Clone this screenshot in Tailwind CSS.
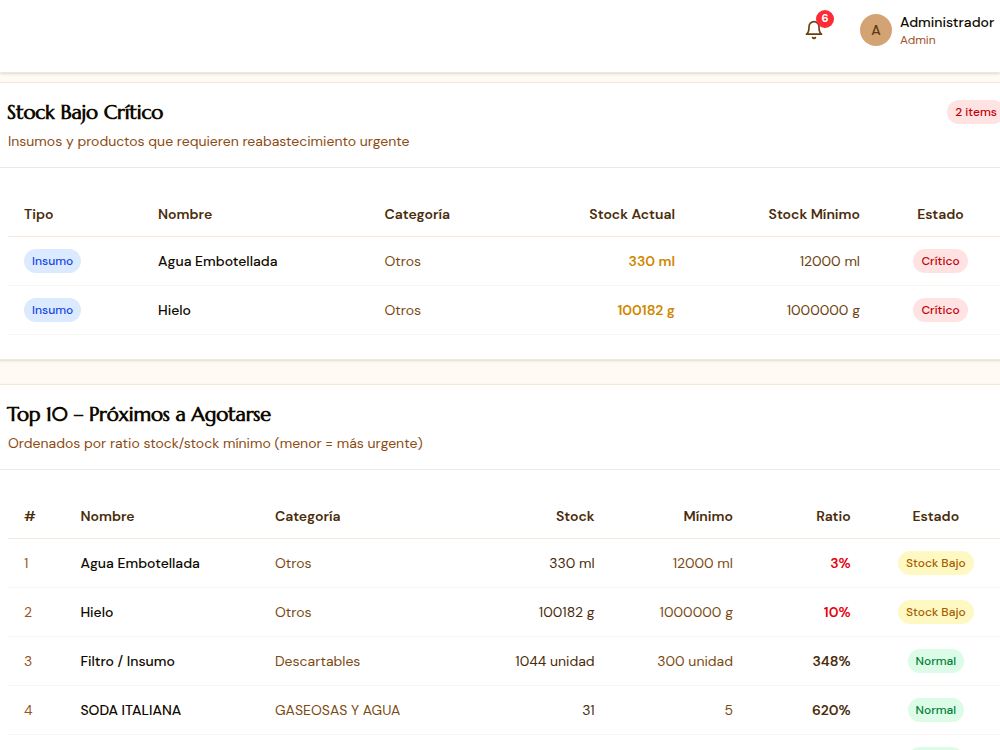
<!DOCTYPE html>
<html lang="es">
<head>
  <meta charset="UTF-8">
  <meta name="viewport" content="width=device-width, initial-scale=1.0">
  <title>Inventario</title>
  <script src="https://cdn.jsdelivr.net/npm/@tailwindcss/browser@4"></script>
</head>
<body class="h-[750px] overflow-hidden bg-[#fffaf3] font-['DM_Sans',Inter,sans-serif] text-sm text-[#0f0a00]">

  <!-- Top bar -->
  <header class="relative h-[73px] bg-white border-b border-[#f0e6da] shadow-sm flex justify-end items-start">
    <button class="relative mt-5 mr-9 w-5 h-5">
      <svg class="w-5 h-5" viewBox="0 0 24 24" fill="none" stroke="#6b3f0c" stroke-width="2" stroke-linecap="round" stroke-linejoin="round">
        <path d="M6 8a6 6 0 0 1 12 0c0 7 3 9 3 9H3s3-2 3-9" />
        <path d="M10.3 21a1.94 1.94 0 0 0 3.4 0" />
      </svg>
      <span class="absolute -top-2.5 left-3 w-[18px] h-[18px] rounded-full bg-[#fb2c36] text-white text-[11px] font-bold flex items-center justify-center">6</span>
    </button>
    <div class="flex gap-2 w-[140px] mt-3">
      <div class="mt-0.5 w-8 h-8 shrink-0 rounded-full bg-[#d4a373] text-[#5c3a0c] font-medium flex items-center justify-center">A</div>
      <div class="whitespace-nowrap">
        <p class="font-medium leading-5">Administrador</p>
        <p class="text-xs text-[#a0522d]">Admin</p>
      </div>
    </div>
  </header>

  <main class="mt-[9px] w-[1044px] -ml-4 space-y-6">

    <!-- Critical stock -->
    <section class="h-[278px] bg-white border border-[#f5e9dc] rounded-lg shadow-sm">
      <div class="h-[85px] px-[23px] pt-4 border-b border-[#f0e9df] flex justify-between items-start">
        <div>
          <h2 class="-ml-px font-[Marcellus,Lato,sans-serif] text-xl leading-7 font-bold tracking-[-0.2px]">Stock Bajo Crítico</h2>
          <p class="mt-1 text-[#8b4c13]">Insumos y productos que requieren reabastecimiento urgente</p>
        </div>
        <span class="mt-px -mr-px h-6 px-2 rounded-full bg-[#ffe2e2] text-[#c10007] text-xs leading-6 font-medium">2 items</span>
      </div>
      <div class="px-[23px] pt-6">
        <table class="w-[997px] table-fixed">
          <colgroup>
            <col class="w-[134px]"><col class="w-[226.5px]"><col class="w-[180px]"><col class="w-[142.5px]"><col class="w-[185px]"><col class="w-[129px]">
          </colgroup>
          <thead>
            <tr class="h-11 border-b border-[#f5e9dc] text-[#4a2c0a]">
              <th class="px-4 text-left font-semibold">Tipo</th>
              <th class="px-4 text-left font-semibold">Nombre</th>
              <th class="px-4 text-left font-semibold">Categoría</th>
              <th class="px-4 text-right font-semibold">Stock Actual</th>
              <th class="px-4 text-right font-semibold">Stock Mínimo</th>
              <th class="px-4 text-center font-semibold">Estado</th>
            </tr>
          </thead>
          <tbody>
            <tr class="h-[49px] border-b border-[#f7f5f2]">
              <td class="px-4"><span class="inline-block h-6 px-2 rounded-full bg-[#dbeafe] text-[#1447e6] text-xs leading-6 font-medium align-middle">Insumo</span></td>
              <td class="px-4 font-medium">Agua Embotellada</td>
              <td class="px-4 text-[#7b4a12]">Otros</td>
              <td class="px-4 text-right font-semibold text-[#d08700]">330 ml</td>
              <td class="px-4 text-right text-[#6b4210]">12000 ml</td>
              <td class="px-4 text-center"><span class="inline-block h-6 px-2 rounded-full bg-[#ffe2e2] text-[#c10007] text-xs leading-6 font-medium align-middle">Crítico</span></td>
            </tr>
            <tr class="h-[49px] border-b border-[#f7f5f2]">
              <td class="px-4"><span class="inline-block h-6 px-2 rounded-full bg-[#dbeafe] text-[#1447e6] text-xs leading-6 font-medium align-middle">Insumo</span></td>
              <td class="px-4 font-medium">Hielo</td>
              <td class="px-4 text-[#7b4a12]">Otros</td>
              <td class="px-4 text-right font-semibold text-[#d08700]">100182 g</td>
              <td class="px-4 text-right text-[#6b4210]">1000000 g</td>
              <td class="px-4 text-center"><span class="inline-block h-6 px-2 rounded-full bg-[#ffe2e2] text-[#c10007] text-xs leading-6 font-medium align-middle">Crítico</span></td>
            </tr>
          </tbody>
        </table>
      </div>
    </section>

    <!-- Top 10 -->
    <section class="bg-white border border-[#f5e9dc] rounded-lg shadow-sm">
      <div class="h-[85px] px-[23px] pt-4 border-b border-[#f0e9df]">
        <h2 class="-ml-px font-[Marcellus,Lato,sans-serif] text-xl leading-7 font-bold tracking-[-0.2px]">Top 10 – Próximos a Agotarse</h2>
        <p class="mt-1 text-[#8b4c13]">Ordenados por ratio stock/stock mínimo (menor = más urgente)</p>
      </div>
      <div class="px-[23px] pt-6">
        <table class="w-[997px] table-fixed">
          <colgroup>
            <col class="w-[56.4px]"><col class="w-[194.6px]"><col class="w-[210px]"><col class="w-[141.6px]"><col class="w-[138.4px]"><col class="w-[117.7px]"><col class="w-[138.3px]">
          </colgroup>
          <thead>
            <tr class="h-11 border-b border-[#f5e9dc] text-[#4a2c0a]">
              <th class="px-4 text-left font-semibold">#</th>
              <th class="px-4 text-left font-semibold">Nombre</th>
              <th class="px-4 text-left font-semibold">Categoría</th>
              <th class="px-4 text-right font-semibold">Stock</th>
              <th class="px-4 text-right font-semibold">Mínimo</th>
              <th class="px-4 text-right font-semibold">Ratio</th>
              <th class="px-4 text-center font-semibold">Estado</th>
            </tr>
          </thead>
          <tbody>
            <tr class="h-[49px] border-b border-[#f7f5f2]">
              <td class="px-4 text-[#9a5520]">1</td>
              <td class="px-4 font-medium">Agua Embotellada</td>
              <td class="px-4 text-[#7b4a12]">Otros</td>
              <td class="px-4 text-right text-[#4a2c0a]">330 ml</td>
              <td class="px-4 text-right text-[#7b4a12]">12000 ml</td>
              <td class="px-4 text-right font-semibold text-[#e7000b]">3%</td>
              <td class="px-4 text-center"><span class="inline-block h-6 px-2 rounded-full bg-[#fef9c2] text-[#a65f00] text-xs leading-6 font-medium align-middle">Stock Bajo</span></td>
            </tr>
            <tr class="h-[49px] border-b border-[#f7f5f2]">
              <td class="px-4 text-[#9a5520]">2</td>
              <td class="px-4 font-medium">Hielo</td>
              <td class="px-4 text-[#7b4a12]">Otros</td>
              <td class="px-4 text-right text-[#4a2c0a]">100182 g</td>
              <td class="px-4 text-right text-[#7b4a12]">1000000 g</td>
              <td class="px-4 text-right font-semibold text-[#e7000b]">10%</td>
              <td class="px-4 text-center"><span class="inline-block h-6 px-2 rounded-full bg-[#fef9c2] text-[#a65f00] text-xs leading-6 font-medium align-middle">Stock Bajo</span></td>
            </tr>
            <tr class="h-[49px] border-b border-[#f7f5f2]">
              <td class="px-4 text-[#9a5520]">3</td>
              <td class="px-4 font-medium">Filtro / Insumo</td>
              <td class="px-4 text-[#7b4a12]">Descartables</td>
              <td class="px-4 text-right text-[#4a2c0a]">1044 unidad</td>
              <td class="px-4 text-right text-[#7b4a12]">300 unidad</td>
              <td class="px-4 text-right font-semibold text-[#4a2c0a]">348%</td>
              <td class="px-4 text-center"><span class="inline-block h-6 px-2 rounded-full bg-[#dcfce7] text-[#008236] text-xs leading-6 font-medium align-middle">Normal</span></td>
            </tr>
            <tr class="h-[49px] border-b border-[#f7f5f2]">
              <td class="px-4 text-[#9a5520]">4</td>
              <td class="px-4 font-medium">SODA ITALIANA</td>
              <td class="px-4 text-[#7b4a12]">GASEOSAS Y AGUA</td>
              <td class="px-4 text-right text-[#4a2c0a]">31</td>
              <td class="px-4 text-right text-[#7b4a12]">5</td>
              <td class="px-4 text-right font-semibold text-[#4a2c0a]">620%</td>
              <td class="px-4 text-center"><span class="inline-block h-6 px-2 rounded-full bg-[#dcfce7] text-[#008236] text-xs leading-6 font-medium align-middle">Normal</span></td>
            </tr>
            <tr class="h-[49px]">
              <td class="px-4" colspan="6"></td>
              <td class="px-4 text-center"><span class="inline-block h-6 w-14 rounded-full bg-[#dcfce7] align-middle"></span></td>
            </tr>
          </tbody>
        </table>
      </div>
    </section>

  </main>
</body>
</html>
